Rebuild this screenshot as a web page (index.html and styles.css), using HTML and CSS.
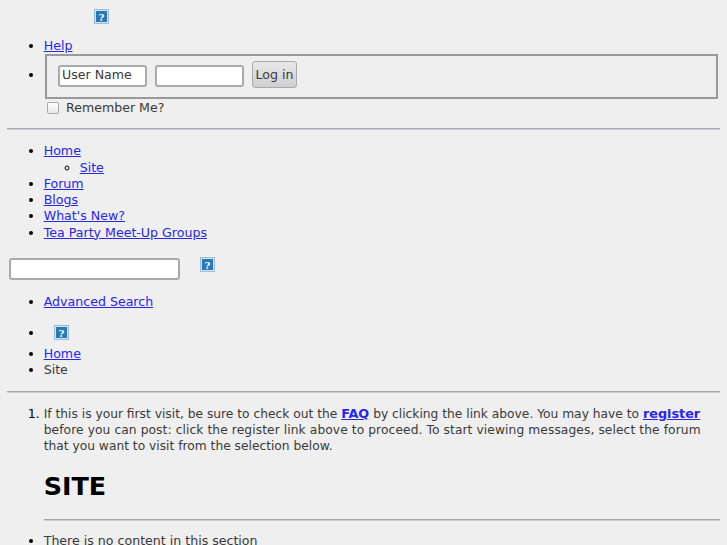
FILE: index.html
```html
<!DOCTYPE html>
<html lang="en">
<head>
    <meta charset="UTF-8">
    <title>Site</title>
    <link rel="stylesheet" href="styles.css">
</head>
<body>

<div class="logo-row">
    <svg class="qmark" width="15" height="15" viewBox="0 0 15 15"><rect x="0.5" y="0.5" width="14" height="14" fill="#d5e3f2" stroke="#9dbcdc"/><rect x="2" y="2" width="11" height="11" fill="#2a78b8"/><text x="7.5" y="11.5" text-anchor="middle" class="qmark-text">?</text></svg>
</div>

<ul class="top-links">
    <li><a href="#">Help</a></li>
    <li>
        <fieldset class="login">
            <input type="text" class="textbox user" value="User Name">
            <input type="password" class="textbox pass">
            <button type="button" class="login-btn">Log in</button>
        </fieldset>
        <label class="remember"><input type="checkbox"> Remember Me?</label>
    </li>
</ul>

<hr class="rule first">

<ul class="nav">
    <li><a href="#">Home</a>
        <ul class="subnav">
            <li><a href="#">Site</a></li>
        </ul>
    </li>
    <li><a href="#">Forum</a></li>
    <li><a href="#">Blogs</a></li>
    <li><a href="#">What's New?</a></li>
    <li><a href="#">Tea Party Meet-Up Groups</a></li>
</ul>

<div class="search-row">
    <input type="text" class="textbox search">
    <svg class="qmark" width="15" height="15" viewBox="0 0 15 15"><rect x="0.5" y="0.5" width="14" height="14" fill="#d5e3f2" stroke="#9dbcdc"/><rect x="2" y="2" width="11" height="11" fill="#2a78b8"/><text x="7.5" y="11.5" text-anchor="middle" class="qmark-text">?</text></svg>
</div>

<ul class="adv">
    <li><a href="#">Advanced Search</a></li>
</ul>

<ul class="crumbs">
    <li class="crumb-icon"><svg class="qmark" width="15" height="15" viewBox="0 0 15 15"><rect x="0.5" y="0.5" width="14" height="14" fill="#d5e3f2" stroke="#9dbcdc"/><rect x="2" y="2" width="11" height="11" fill="#2a78b8"/><text x="7.5" y="11.5" text-anchor="middle" class="qmark-text">?</text></svg></li>
    <li><a href="#">Home</a></li>
    <li>Site</li>
</ul>

<hr class="rule second">

<ol class="notices">
    <li>
        <p class="notice-text">If this is your first visit, be sure to check out the <a href="#" class="strong">FAQ</a> by clicking the link above. You may have to <a href="#" class="strong">register</a> <span class="loose">before you can post: click the register link above to proceed. To start viewing messages, select the forum</span> that you want to visit from the selection below.</p>
        <h1>SITE</h1>
        <hr class="rule inner">
    </li>
</ol>

<ul class="empty">
    <li>There is no content in this section</li>
</ul>

</body>
</html>
```

FILE: styles.css
```css
html, body {
    height: 545px;
    overflow: hidden;
}

body {
    margin: 0;
    padding: 0 7px;
    background-color: #efefef;
    color: #3a3a3a;
    font-family: 'DejaVu Sans', sans-serif;
    font-size: 12.6px;
    line-height: 16.25px;
}

a {
    color: #2626ee;
}

ul, ol {
    margin: 0;
    padding-left: 36.7px;
}

li::marker {
    color: #000;
}

.qmark {
    display: block;
}

.qmark-text {
    font-family: 'DejaVu Serif', serif;
    font-size: 10px;
    font-weight: bold;
    fill: #fff;
}

.logo-row {
    padding: 9px 0 0 87px;
    height: 38px;
    box-sizing: border-box;
}

.login {
    margin: 0 2px 0 1.3px;
    padding: 8px 0 8px 11px;
    border: 2px solid #999;
    display: flex;
    align-items: flex-start;
    gap: 8px;
    height: 45px;
    box-sizing: border-box;
}

.textbox {
    box-sizing: border-box;
    height: 22px;
    padding: 0 2px 3px;
    border: 2px solid #aaa;
    border-radius: 3px;
    background: #fff;
    color: #3a3a3a;
    font-family: inherit;
    font-size: 12.6px;
}

.user, .pass {
    width: 89px;
    margin-top: 1px;
}

.login-btn {
    box-sizing: border-box;
    height: 27px;
    width: 45px;
    margin-top: -3px;
    padding: 0;
    border: 1px solid #aaa;
    border-radius: 3px;
    background: linear-gradient(#e8e8e8, #cfcfcf);
    color: #3a3a3a;
    font-family: inherit;
    font-size: 12.6px;
}

.remember {
    display: flex;
    align-items: center;
    gap: 7px;
    margin-left: 3.3px;
    height: 18px;
}

.remember input {
    appearance: none;
    margin: 0;
    width: 12px;
    height: 12px;
    border: 1px solid #aaa;
    border-radius: 2px;
    background: linear-gradient(#fff, #e8e8f0);
}

.rule {
    margin: 0;
    border: 0;
    border-top: 1px solid #a6a6a6;
    border-bottom: 1px solid #cfcfcf;
    height: 0;
}

.first {
    margin-top: 11px;
    border-top-color: #a8a8b8;
}

.nav {
    margin-top: 13px;
}

.subnav {
    padding-left: 36px;
}

.search-row {
    display: flex;
    align-items: flex-start;
    gap: 20px;
    margin-top: 16px;
    padding-left: 2px;
}

.search {
    width: 171px;
    margin-top: 1px;
}

.adv {
    margin-top: 14px;
}

.crumbs {
    margin-top: 15px;
}

.crumb-icon {
    height: 21px;
    padding-left: 10.3px;
}

.second {
    margin-top: 12px;
}

.notices {
    margin-top: 13px;
}

.notice-text {
    margin: 0;
    font-size: 12.25px;
}

.loose {
    letter-spacing: 0.09px;
}

.strong {
    font-weight: bold;
    font-size: 12.8px;
}

h1 {
    margin: 17px 0 0;
    color: #000;
    font-size: 25.4px;
    line-height: 31px;
}

.inner {
    margin-top: 17px;
}

.empty {
    margin-top: 12px;
}
```
